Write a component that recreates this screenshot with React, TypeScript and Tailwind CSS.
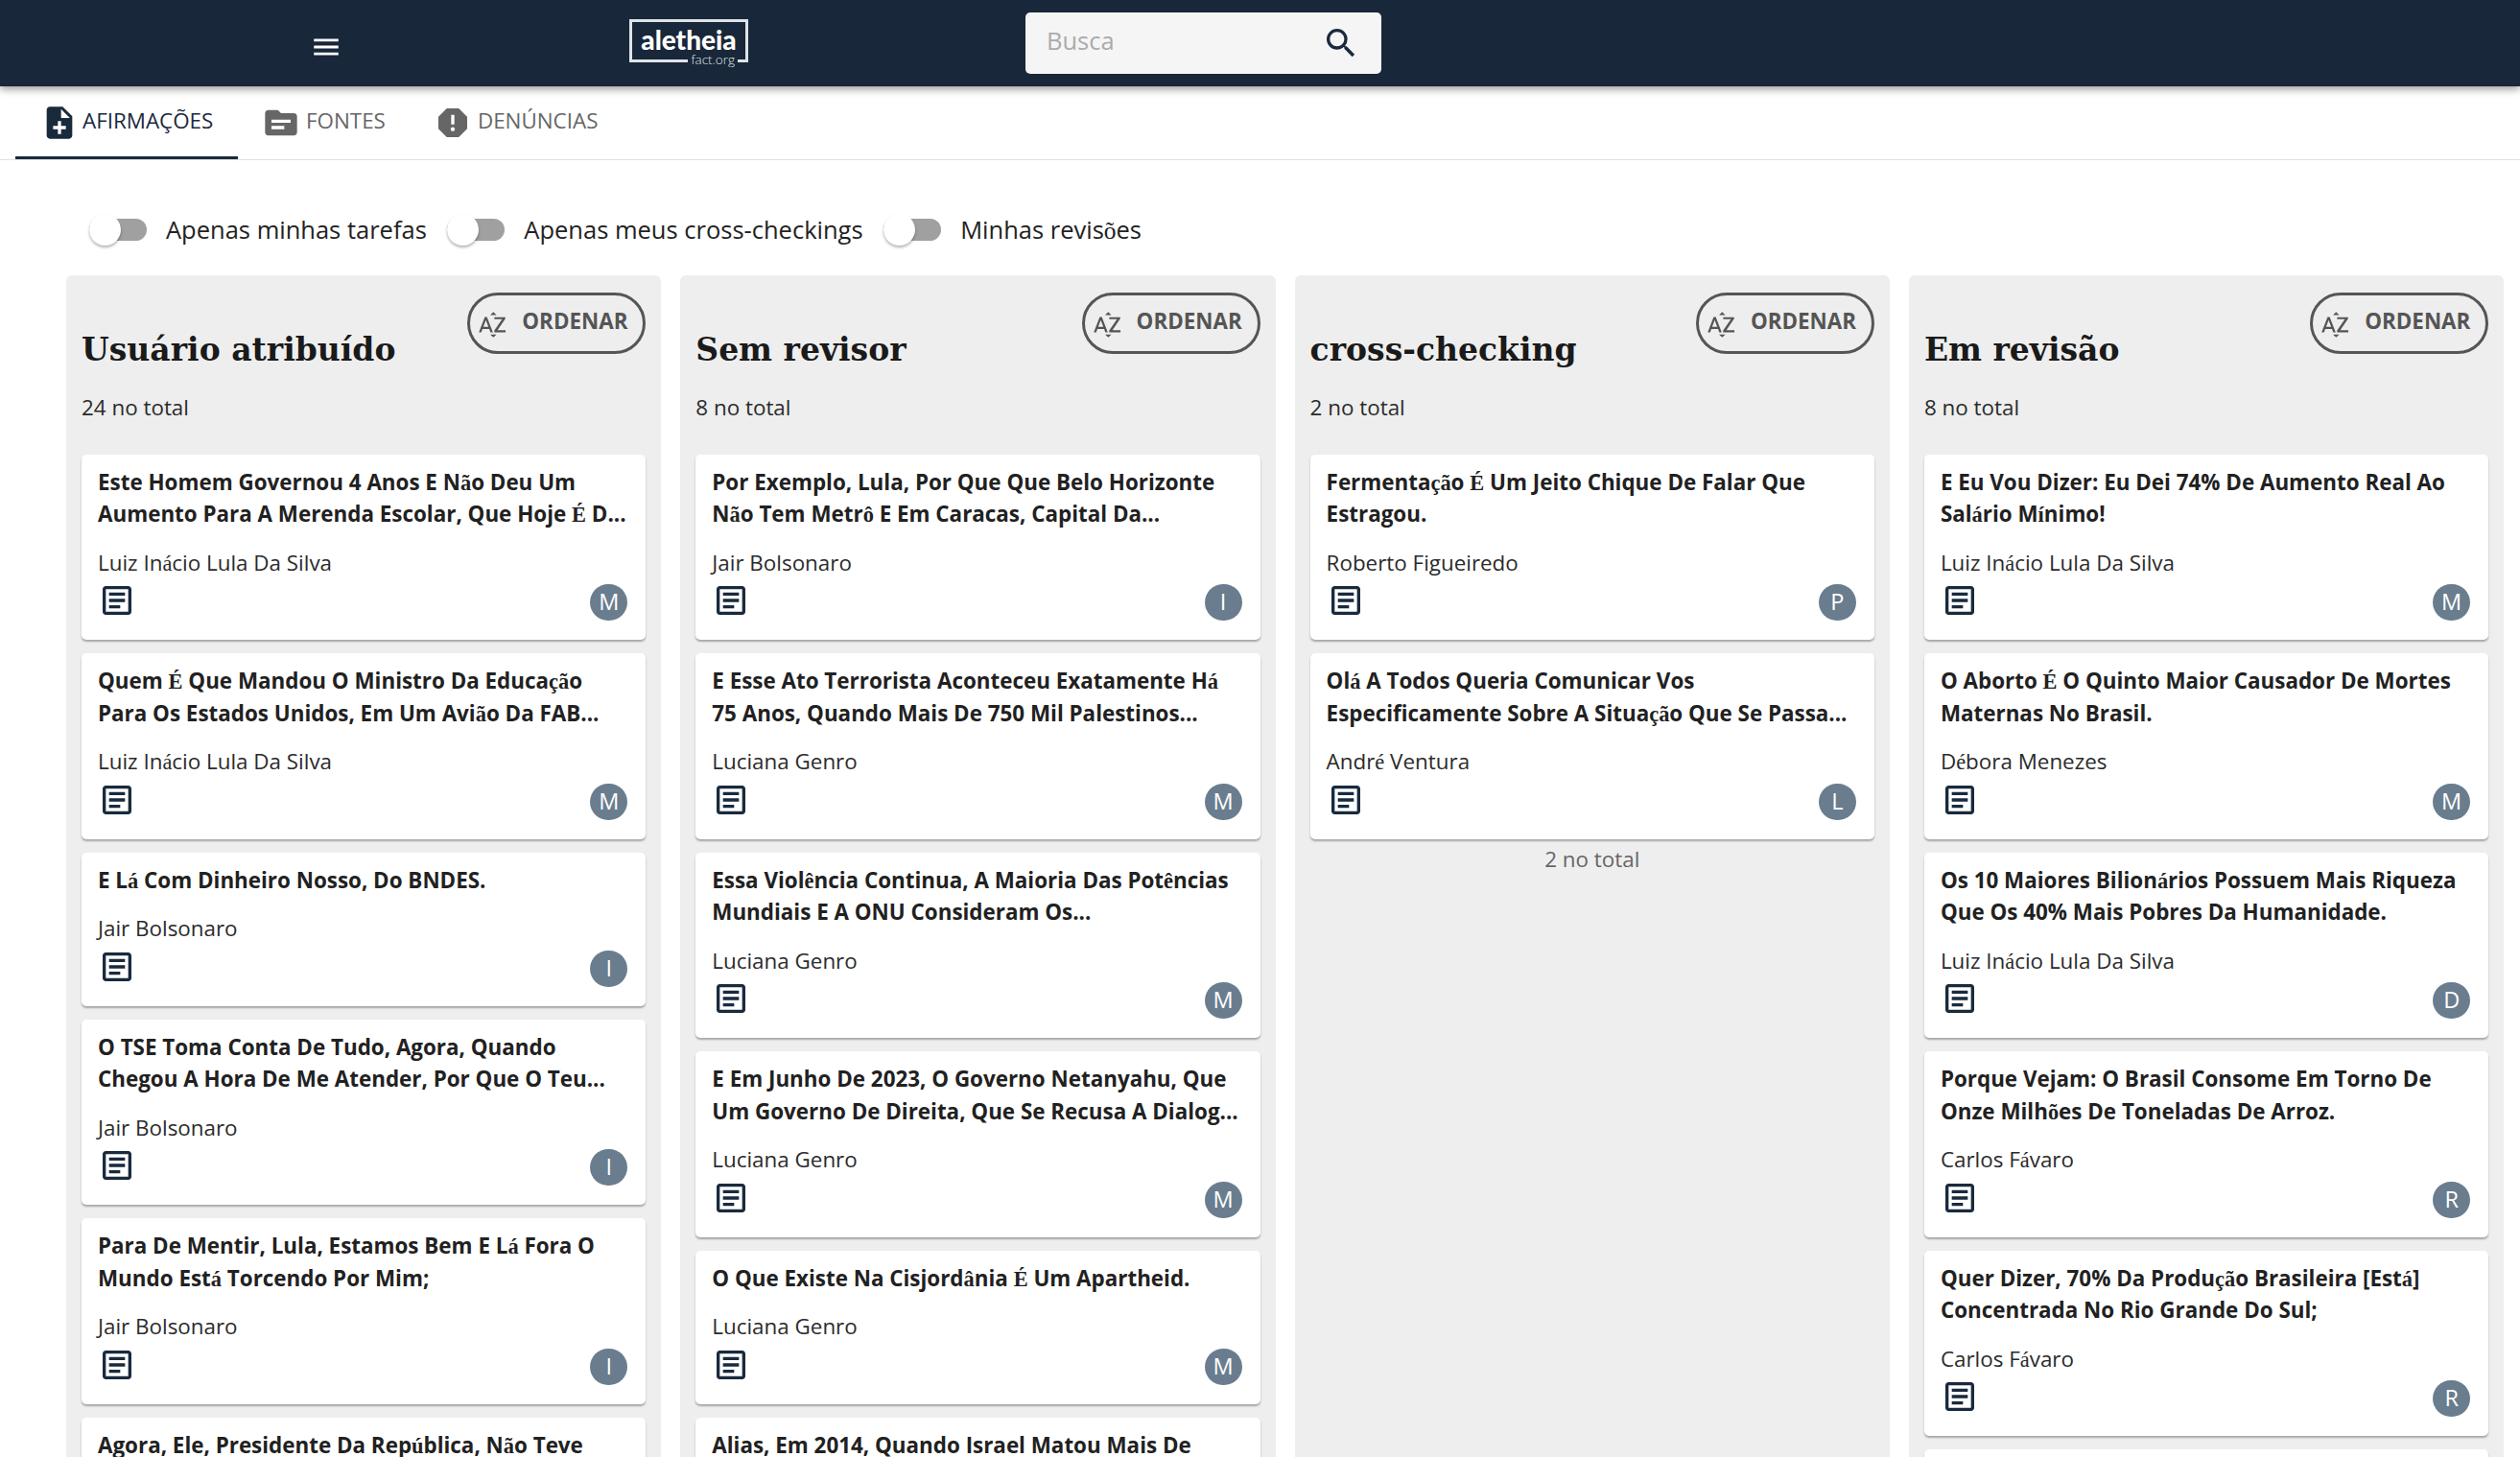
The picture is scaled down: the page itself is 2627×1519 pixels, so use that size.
import React from 'react';
import { MdMenu, MdSearch, MdNoteAdd, MdTopic, MdReport, MdSortByAlpha, MdOutlineArticle } from 'react-icons/md';

interface Claim {
  title: string;
  author: string;
  user: string;
}

interface Column {
  name: string;
  total: number;
  claims: Claim[];
  footer?: boolean;
}

const LULA = 'Luiz Inácio Lula Da Silva';
const JAIR = 'Jair Bolsonaro';
const GENRO = 'Luciana Genro';
const FAVARO = 'Carlos Fávaro';

const columns: Column[] = [
  {
    name: 'Usuário atribuído',
    total: 24,
    claims: [
      { title: 'Este Homem Governou 4 Anos E Não Deu Um\nAumento Para A Merenda Escolar, Que Hoje É D...', author: LULA, user: 'M' },
      { title: 'Quem É Que Mandou O Ministro Da Educação\nPara Os Estados Unidos, Em Um Avião Da FAB...', author: LULA, user: 'M' },
      { title: 'E Lá Com Dinheiro Nosso, Do BNDES.', author: JAIR, user: 'I' },
      { title: 'O TSE Toma Conta De Tudo, Agora, Quando\nChegou A Hora De Me Atender, Por Que O Teu...', author: JAIR, user: 'I' },
      { title: 'Para De Mentir, Lula, Estamos Bem E Lá Fora O\nMundo Está Torcendo Por Mim;', author: JAIR, user: 'I' },
      { title: 'Agora, Ele, Presidente Da República, Não Teve', author: JAIR, user: 'I' },
    ],
  },
  {
    name: 'Sem revisor',
    total: 8,
    claims: [
      { title: 'Por Exemplo, Lula, Por Que Que Belo Horizonte\nNão Tem Metrô E Em Caracas, Capital Da...', author: JAIR, user: 'I' },
      { title: 'E Esse Ato Terrorista Aconteceu Exatamente Há\n75 Anos, Quando Mais De 750 Mil Palestinos...', author: GENRO, user: 'M' },
      { title: 'Essa Violência Continua, A Maioria Das Potências\nMundiais E A ONU Consideram Os...', author: GENRO, user: 'M' },
      { title: 'E Em Junho De 2023, O Governo Netanyahu, Que\nUm Governo De Direita, Que Se Recusa A Dialog...', author: GENRO, user: 'M' },
      { title: 'O Que Existe Na Cisjordânia É Um Apartheid.', author: GENRO, user: 'M' },
      { title: 'Alias, Em 2014, Quando Israel Matou Mais De', author: GENRO, user: 'M' },
    ],
  },
  {
    name: 'cross-checking',
    total: 2,
    footer: true,
    claims: [
      { title: 'Fermentação É Um Jeito Chique De Falar Que\nEstragou.', author: 'Roberto Figueiredo', user: 'P' },
      { title: 'Olá A Todos Queria Comunicar Vos\nEspecificamente Sobre A Situação Que Se Passa...', author: 'André Ventura', user: 'L' },
    ],
  },
  {
    name: 'Em revisão',
    total: 8,
    claims: [
      { title: 'E Eu Vou Dizer: Eu Dei 74% De Aumento Real Ao\nSalário Mínimo!', author: LULA, user: 'M' },
      { title: 'O Aborto É O Quinto Maior Causador De Mortes\nMaternas No Brasil.', author: 'Débora Menezes', user: 'M' },
      { title: 'Os 10 Maiores Bilionários Possuem Mais Riqueza\nQue Os 40% Mais Pobres Da Humanidade.', author: LULA, user: 'D' },
      { title: 'Porque Vejam: O Brasil Consome Em Torno De\nOnze Milhões De Toneladas De Arroz.', author: FAVARO, user: 'R' },
      { title: 'Quer Dizer, 70% Da Produção Brasileira [Está]\nConcentrada No Rio Grande Do Sul;', author: FAVARO, user: 'R' },
      { title: '', author: '', user: '' },
    ],
  },
];

const Accented: React.FC<{ text: string }> = ({ text }) => (
  <>
    {text.split(/([^\x00-\x7F]+)/).map((part, i) =>
      i % 2 === 1 ? (
        <span key={i} className="font-['Liberation_Serif',serif] leading-none">{part}</span>
      ) : (
        part
      )
    )}
  </>
);

const Toggle: React.FC<{ label: string }> = ({ label }) => (
  <div className="flex items-center">
    <div className="relative h-[23px] w-[60px] rounded-full bg-[#a0a0a0]">
      <div className="absolute left-0 top-[-5px] h-[33px] w-[33px] rounded-full bg-white shadow-[0_2px_3px_rgba(0,0,0,0.3)]" />
    </div>
    <span className="ml-[20px] text-[25.5px] leading-[36px] text-[#222222]">
      <Accented text={label} />
    </span>
  </div>
);

const ClaimCard: React.FC<{ claim: Claim }> = ({ claim }) => (
  <div className="rounded-[5px] bg-white px-[17px] pb-[20px] pt-[12px] shadow-[0_2px_2px_rgba(0,0,0,0.3)]">
    <p className="min-h-[33.5px] whitespace-pre-line text-[22.4px] font-bold leading-[33.5px] text-[#212121]">
      <Accented text={claim.title} />
    </p>
    <p className="mt-[17px] min-h-[33.5px] text-[22.4px] leading-[33.5px] text-[#2b2b2b]">
      <Accented text={claim.author} />
    </p>
    <div className="mt-[3px] flex items-start justify-between">
      <MdOutlineArticle size={40} className="text-[#192a3d]" />
      <div className="mr-[2px] mt-[3px] flex h-[38px] w-[39px] items-center justify-center rounded-full bg-[#6a7d8e] text-[23.5px] text-white">
        {claim.user}
      </div>
    </div>
  </div>
);

const KanbanColumn: React.FC<{ column: Column }> = ({ column }) => (
  <div className="h-[1300px] w-[620.3px] rounded-[6px] bg-[#eeeeee] px-[16px] pt-[18px]">
    <div className="flex items-start justify-between">
      <h2 className="mt-[38px] font-['DejaVu_Serif',serif] text-[33px] font-bold leading-[44px] text-[#1a1a1a]">
        {column.name}
      </h2>
      <button className="flex h-[64px] w-[186px] items-center rounded-full border-[3px] border-[#555555] pl-[7px] text-[#555555]">
        <MdSortByAlpha size={33} className="mt-[3px] shrink-0" />
        <span className="mb-[4px] ml-[14px] text-[22.4px] font-bold leading-none">ORDENAR</span>
      </button>
    </div>
    <p className="mt-[21px] text-[22.4px] leading-[33.5px] text-[#2b2b2b]">{column.total} no total</p>
    <div className="mt-[32px] flex flex-col gap-[14px]">
      {column.claims.map((claim, i) => (
        <ClaimCard key={i} claim={claim} />
      ))}
    </div>
    {column.footer && (
      <p className="mt-[4px] text-center text-[22.4px] leading-[33.5px] text-[#666666]">{column.total} no total</p>
    )}
  </div>
);

export default function App() {
  return (
    <div className="h-[1519px] w-full overflow-hidden bg-white font-['Open_Sans',sans-serif]">
      {/* Top bar */}
      <header className="relative z-10 flex h-[90px] items-center bg-[#182739] pl-[323px] shadow-[0_3px_8px_rgba(0,0,0,0.4)]">
        <MdMenu size={34} className="mt-[8px] text-white" />
        <div className="relative ml-[299px] mb-[5px] flex h-[45px] w-[124px] items-center justify-center border-[3px] border-[#dfe3e8]">
          <span className="mb-[3px] font-['Lato',sans-serif] text-[28px] font-black leading-none text-white">aletheia</span>
          <span className="absolute bottom-[-7px] right-[8px] bg-[#182739] px-[3px] text-[13.5px] font-light leading-[13px] text-[#dfe3e8]">
            fact.org
          </span>
        </div>
        <div className="ml-[289px] flex h-[64px] w-[371px] items-center rounded-[5px] bg-[#f5f5f5] pl-[22px] pr-[22px]">
          <span className="mb-[6px] flex-1 text-[25.5px] text-[#ababab]">Busca</span>
          <MdSearch size={40} className="text-[#192a3d]" />
        </div>
      </header>

      {/* Tabs */}
      <nav className="flex h-[77px] border-b border-[#e0e0e0] pl-[16px] text-[22.4px]">
        <div className="flex h-[76px] w-[232px] items-start border-b-[3px] border-[#192a3d] pl-[26px] pt-[18px] text-[#192a3d]">
          <MdNoteAdd size={40} className="shrink-0" />
          <span className="ml-[4px] mt-[1px] leading-[33px]">AFIRMAÇÕES</span>
        </div>
        <div className="ml-[25px] flex items-start pt-[18px] text-[#666666]">
          <MdTopic size={40} className="shrink-0" />
          <span className="ml-[6px] mt-[1px] leading-[33px]">FONTES</span>
        </div>
        <div className="ml-[50px] flex items-start pt-[18px] text-[#666666]">
          <MdReport size={40} className="shrink-0" />
          <span className="ml-[6px] mt-[1px] leading-[33px]">DENÚNCIAS</span>
        </div>
      </nav>

      {/* Filters */}
      <div className="mt-[54px] flex gap-[21.5px] pl-[93px]">
        <Toggle label="Apenas minhas tarefas" />
        <Toggle label="Apenas meus cross-checkings" />
        <Toggle label="Minhas revisões" />
      </div>

      {/* Board */}
      <div className="mt-[30px] flex gap-[20px] pl-[69px]">
        {columns.map((column) => (
          <KanbanColumn key={column.name} column={column} />
        ))}
      </div>
    </div>
  );
}
